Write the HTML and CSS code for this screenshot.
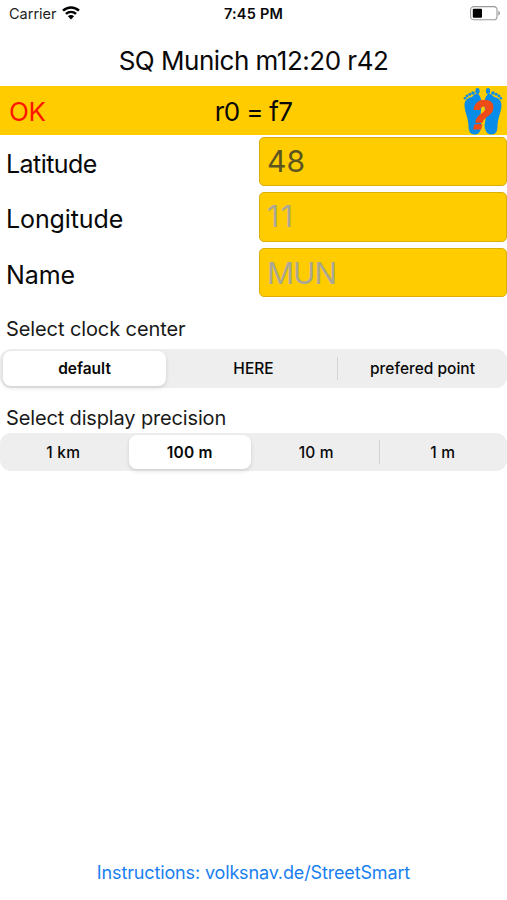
FILE: index.html
```html
<!DOCTYPE html>
<html lang="en">
<head>
<meta charset="utf-8">
<title>SQ Munich</title>
<link rel="stylesheet" href="styles.css">
</head>
<body>
<div class="screen">
  <header class="status">
    <div class="carrier"><span class="carrier-name">Carrier</span>
      <svg class="wifi" width="18" height="14" viewBox="0 0 18 14" fill="none" stroke="#000" stroke-width="2.5"><path d="M1 4.7C5.6.3 12.4.3 17 4.7M3.900 7.900c3-2.700 7.200-2.700 10.200 0"/><path d="M5.900 10.300c1.800-1.600 4.400-1.600 6.200 0L9 13.600z" fill="#000" stroke="none"/></svg>
    </div>
    <span class="time">7:45 PM</span>
    <svg class="battery" width="31" height="15" viewBox="0 0 31 15"><rect x=".6" y=".6" width="26.4" height="13.2" rx="3.4" fill="#fff" stroke="#999" stroke-width="1.1"/><rect x="2.800" y="2.700" width="9.200" height="9" rx="1" fill="#000"/><path d="M28.300 4.800c2.200.8 2.200 4.200 0 5z" fill="#999"/></svg>
  </header>
  <h1 class="title"><span>SQ Munich m12:20 r42</span></h1>
  <div class="bar">
    <span class="ok">OK</span>
    <span class="result">r0 = f7</span>
    <svg class="feet" width="42" height="49" viewBox="0 0 42 49">
      <g fill="#078ce8">
        <path d="M2.500 18C2.500 13 6 10.500 10 10c1.500-2 4-4 6-3 2 1.500 3.500 5 3.500 9 0 6-1 9-1 15 0 5 2 7 0 12-1 3-3 4.500-6 4.500-4 0-6-3-6-8C6.500 31 2.500 25 2.500 18z"/>
        <path d="M39.500 18c0-5-3.500-7.500-7.500-8-1.500-2-4-4-6-3-2 1.500-3.500 5-3.500 9 0 6 1 9 1 15 0 5-2 7 0 12 1 3 3 4.500 6 4.500 4 0 6-3 6-8 0-9 4-14.500 4-21.500z"/>
        <ellipse cx="15.500" cy="4" rx="2.100" ry="3"/><circle cx="11" cy="6" r="1.800"/><circle cx="7.800" cy="7.200" r="1.500"/><circle cx="5" cy="9" r="1.500"/><circle cx="3" cy="11.300" r="1.300"/>
        <ellipse cx="26" cy="4" rx="2.100" ry="3"/><circle cx="31" cy="6" r="1.800"/><circle cx="34.200" cy="7.200" r="1.500"/><circle cx="37" cy="9" r="1.500"/><circle cx="39" cy="11.300" r="1.300"/>
      </g>
      <path d="M11.500 23C12.500 16 16.500 12.800 22.500 12.800c6.500 0 9.700 3.500 8.800 9-1 7.500-9.600 7.500-10.600 14h-7.500c1.300-9 9.200-9.500 10.200-13.800.6-3.300-4.700-3.400-5.400 1z" fill="#ef4b18"/>
      <path d="M12.500 37.300h8l-1.500 5.200h-8z" fill="#ef4b18"/>
    </svg>
  </div>
  <div class="form">
    <div class="row row-lat"><span class="label lat">Latitude</span><div class="field filled"><span>48</span></div></div>
    <div class="row row-lon"><span class="label lon">Longitude</span><div class="field eleven"><span>11</span></div></div>
    <div class="row row-name"><span class="label name">Name</span><div class="field mun"><span>MUN</span></div></div>
  </div>
  <h2 class="heading center-heading"><span>Select clock center</span></h2>
  <div class="segments three">
    <div class="segment selected"><span class="default">default</span></div>
    <div class="segment"><span class="here">HERE</span></div>
    <div class="segment divided"><span class="point">prefered point</span></div>
  </div>
  <h2 class="heading precision-heading"><span>Select display precision</span></h2>
  <div class="segments four">
    <div class="segment"><span>1 km</span></div>
    <div class="segment selected"><span>100 m</span></div>
    <div class="segment"><span>10 m</span></div>
    <div class="segment divided"><span>1 m</span></div>
  </div>
  <footer class="footer"><a class="link">Instructions: volksnav.de/StreetSmart</a></footer>
</div>
</body>
</html>
```
FILE: styles.css
```css
* { box-sizing: border-box; }
body { margin: 0; background: #fff; color: #080808; font-family: Inter, "Liberation Sans", sans-serif; }
.screen { width: 507px; height: 900px; display: flex; flex-direction: column; overflow: hidden; white-space: nowrap; }
.status { height: 28px; display: grid; grid-template-columns: 1fr auto 1fr; align-items: center; padding: 0 6px 0 9px; font-size: 14.5px; line-height: 28px; flex: none; }
.carrier { display: flex; align-items: center; gap: 5px; color: #222; }
.wifi { margin-top: -2px; }
.time { font-weight: 600; letter-spacing: .2px; margin-right: 3px; }
.battery { justify-self: end; margin-top: -1px; }
.title { margin: 0; height: 58px; font-size: 26px; font-weight: 400; line-height: 65px; text-align: center; letter-spacing: -.5px; flex: none; }
.bar { height: 49px; background: #fc0; display: grid; grid-template-columns: 1fr auto 1fr; align-items: center; padding: 0 3px 0 9px; font-size: 26px; line-height: 51px; flex: none; }
.ok { color: #ff1500; letter-spacing: -.5px; }
.result { letter-spacing: -.7px; margin-right: 6px; }
.feet { justify-self: end; }
.form { height: 163px; padding-top: 2px; display: flex; flex-direction: column; gap: 6px; flex: none; }
.row { display: grid; grid-template-columns: 252px 248px; grid-template-rows: 100%; padding-left: 7px; }
.row-lat { height: 49px; }
.row-lon { height: 50px; }
.row-name { height: 49px; }
.label { font-size: 25px; line-height: 54px; margin-left: -1px; }
.lat { letter-spacing: -.55px; }
.lon { letter-spacing: -.1px; }
.name { letter-spacing: -.1px; }
.field { border: 1px solid #dcae0c; border-radius: 5px; background: #fc0; color: #aaa795; font-size: 30px; line-height: 47px; padding-left: 7px; }
.filled { color: #5b5522; }
.eleven { letter-spacing: 1.5px; }
.mun { letter-spacing: -1px; line-height: 48px; }
.heading { margin: 0; padding-left: 6px; font-size: 20px; font-weight: 400; color: #191919; flex: none; }
.center-heading { height: 51px; line-height: 62px; letter-spacing: -.1px; }
.precision-heading { height: 45px; line-height: 60px; letter-spacing: -.15px; }
.segments { display: grid; background: #eee; border-radius: 11px; font-size: 15.5px; font-weight: 500; padding: 2px 0; flex: none; }
.three { height: 39px; grid-template-columns: repeat(3, 1fr); }
.four { height: 38px; grid-template-columns: repeat(4, 1fr); padding-right: 1px; letter-spacing: .2px; }
.segment { display: flex; align-items: center; justify-content: center; }
.selected { background: #fff; border-radius: 8px; font-weight: 600; margin: 0 3px; box-shadow: 0 2px 4px rgba(0,0,0,.13); }
.divided { border-left: 1px solid #d5d5d5; border-image: linear-gradient(transparent 18%, #d3d3d3 18%, #d3d3d3 82%, transparent 82%) 1; margin-left: -1px; }
.four .selected { margin: 0 2px; }
.footer { margin-top: auto; height: 56px; text-align: center; line-height: 57px; font-size: 18px; letter-spacing: -.14px; }
.link { color: #197ff0; }
```
